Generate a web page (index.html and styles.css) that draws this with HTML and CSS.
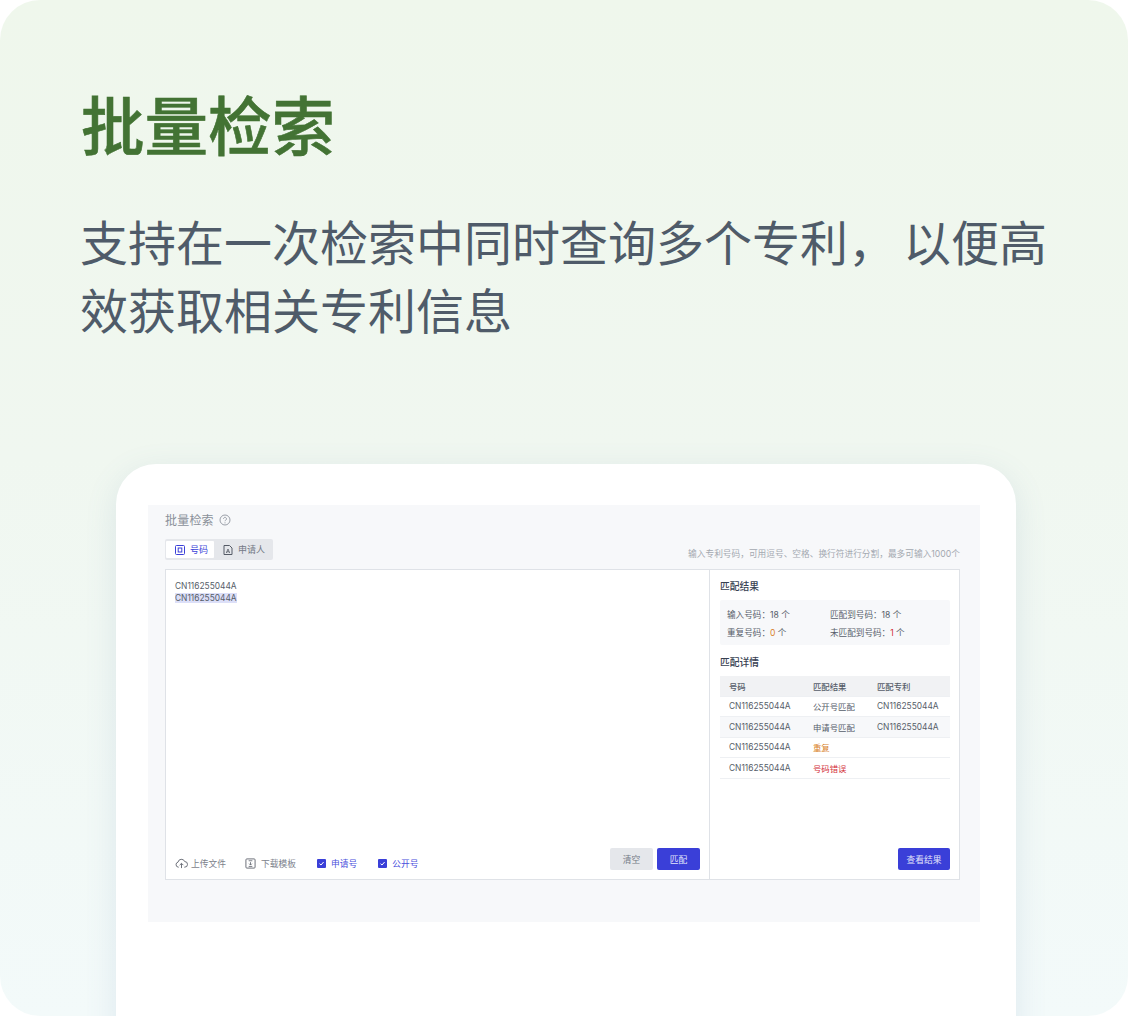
FILE: index.html
```html
<!DOCTYPE html>
<html lang="zh-CN">
<head>
<meta charset="utf-8">
<title>批量检索</title>
<link rel="stylesheet" href="styles.css">
</head>
<body>
<main class="hero">
  <h1 class="hero-title">批量检索</h1>
  <p class="hero-text">支持在一次检索中同时查询多个专利<span class="comma">，</span>以便高<br>效获取相关专利信息</p>
  <section class="device">
    <div class="app">
      <div class="app-title">批量检索
        <svg class="help" viewBox="0 0 12 12" width="12" height="12"><circle cx="6" cy="6" r="5" fill="none" stroke="#9a9fa8" stroke-width="1"/><path d="M4.500 4.800a1.500 1.500 0 1 1 2.300 1.300c-.5.300-.8.600-.8 1.100" fill="none" stroke="#9a9fa8" stroke-width="1"/><circle cx="6" cy="8.800" r=".6" fill="#9a9fa8"/></svg>
      </div>
      <div class="toolbar">
        <div class="tabs">
          <div class="tab tab-active">
            <svg viewBox="0 0 12 12" width="12" height="12"><rect x="1.500" y="1.500" width="9" height="9" rx="1" fill="none" stroke="#3a3fd8" stroke-width="1"/><rect x="4.200" y="4" width="3.600" height="4" fill="none" stroke="#3a3fd8" stroke-width="1"/></svg>
            号码
          </div>
          <div class="tab">
            <svg viewBox="0 0 12 12" width="12" height="12"><path d="M2 1.500h5.500L10 4v6.500H2z" fill="none" stroke="#555b66" stroke-width="1"/><path d="M4.300 9 6 5l1.700 4M4.900 7.800h2.200" fill="none" stroke="#555b66" stroke-width=".8"/></svg>
            申请人
          </div>
        </div>
        <div class="hint">输入专利号码，可用逗号、空格、换行符进行分割，最多可输入1000个</div>
      </div>
      <div class="panel">
        <div class="input-pane">
          <div class="codes">
            <div>CN116255044A</div>
            <div><span class="selected">CN116255044A</span></div>
          </div>
          <div class="input-foot">
            <div class="tool tool-upload">
              <svg viewBox="0 0 14 12" width="13" height="11"><path d="M4 10H3.500a2.800 2.800 0 0 1-.3-5.500 3.800 3.800 0 0 1 7.300-.6A3 3 0 0 1 10.500 10H10" fill="none" stroke="#60656f" stroke-width="1"/><path d="M7 11V6M5 7.800 7 5.800l2 2" fill="none" stroke="#60656f" stroke-width="1"/></svg>
              上传文件
            </div>
            <div class="tool tool-download">
              <svg viewBox="0 0 12 12" width="11" height="11"><rect x="1" y="1" width="10" height="10" rx="1" fill="none" stroke="#60656f" stroke-width="1"/><path d="M4 3h4M6 4.500v3M4.500 6.200 6 7.700l1.500-1.500M4 9.200h4" fill="none" stroke="#60656f" stroke-width=".9"/></svg>
              下载模板
            </div>
            <label class="check"><span class="box"><svg viewBox="0 0 9 9" width="9" height="9"><path d="M2.500 4.700 4 6l2.600-3" fill="none" stroke="#fff" stroke-width="1"/></svg></span>申请号</label>
            <label class="check"><span class="box"><svg viewBox="0 0 9 9" width="9" height="9"><path d="M2.500 4.700 4 6l2.600-3" fill="none" stroke="#fff" stroke-width="1"/></svg></span>公开号</label>
            <div class="actions">
              <button class="btn btn-grey">清空</button>
              <button class="btn btn-blue">匹配</button>
            </div>
          </div>
        </div>
        <div class="result-pane">
          <h2 class="section-title">匹配结果</h2>
          <div class="summary">
            <div>输入号码：18 个</div>
            <div>匹配到号码：18 个</div>
            <div>重复号码：<span class="orange">0</span> 个</div>
            <div>未匹配到号码：<span class="red">1</span> 个</div>
          </div>
          <h2 class="section-title section-title-detail">匹配详情</h2>
          <div class="table">
            <div class="row row-head"><span>号码</span><span>匹配结果</span><span>匹配专利</span></div>
            <div class="row"><span>CN116255044A</span><span>公开号匹配</span><span>CN116255044A</span></div>
            <div class="row row-alt"><span>CN116255044A</span><span>申请号匹配</span><span>CN116255044A</span></div>
            <div class="row"><span>CN116255044A</span><span class="orange">重复</span><span></span></div>
            <div class="row"><span>CN116255044A</span><span class="red">号码错误</span><span></span></div>
          </div>
          <div class="result-foot"><button class="btn btn-blue btn-wide">查看结果</button></div>
        </div>
      </div>
    </div>
  </section>
</main>
</body>
</html>
```
FILE: styles.css
```css
* { box-sizing: border-box; }
html, body { margin: 0; padding: 0; background: #fff; }
body {
  width: 1128px;
  height: 1016px;
  overflow: hidden;
  font-family: Inter, "Noto Sans CJK SC", sans-serif;
}
.hero {
  width: 1128px;
  height: 1016px;
  border-radius: 40px;
  overflow: hidden;
  padding: 83px 80px 0 80px;
  background: linear-gradient(180deg, #eff7ec 0%, #f0f7f0 45%, #f3fafa 100%);
}
.hero-title {
  margin: 0 0 0 1px;
  font: 500 63.500px/78px "Noto Sans CJK SC", sans-serif;
  -webkit-text-stroke: .6px #437334;
  color: #437334;
}
.hero-text {
  margin: 45px 0 0;
  width: 980px;
  font: 400 48px/68px "Noto Sans CJK SC", sans-serif;
  color: #4f5b69;
}
.comma { letter-spacing: 7px; }
.device {
  width: 900px;
  height: 600px;
  margin: 122px 0 0 36px;
  padding: 41px 36px 0 32px;
  border-radius: 40px;
  background: #fff;
  box-shadow: 0 8px 32px rgba(90, 130, 170, .14);
}
.app {
  height: 417px;
  padding: 0 20px 0 17px;
  background: #f7f8fa;
}
.app-title {
  display: flex;
  align-items: center;
  gap: 5px;
  height: 29px;
  font-size: 12px;
  letter-spacing: .2px;
  color: #8a9099;
}
.toolbar {
  display: flex;
  justify-content: space-between;
  align-items: flex-end;
  margin-top: 5px;
  height: 21px;
}
.tabs {
  display: flex;
  height: 21px;
  padding: 2px 1px;
  border-radius: 2px;
  background: #e5e7eb;
}
.tab {
  display: flex;
  align-items: center;
  gap: 4px;
  width: 58px;
  padding-left: 8px;
  font-size: 9px;
  white-space: nowrap;
  color: #737985;
}
.tab-active {
  width: 48px;
  background: #fff;
  color: #3a3fd8;
  border-radius: 1px;
}
.hint {
  font-size: 8.700px;
  line-height: 11px;
  color: #a3a8b0;
}
.panel {
  display: flex;
  margin-top: 9px;
  height: 311px;
  border: 1px solid #dfe2e7;
  background: #fff;
}
.input-pane {
  display: flex;
  flex: none;
  flex-direction: column;
  justify-content: space-between;
  width: 544px;
  padding: 10px 9px 9px 9px;
  border-right: 1px solid #dfe2e7;
}
.codes {
  font-size: 8.400px;
  line-height: 12px;
  color: #565d69;
}
.selected { background: #dcdff8; }
.input-foot {
  display: flex;
  align-items: flex-end;
  font-size: 8.750px;
  color: #7d828c;
}
.tool {
  display: flex;
  align-items: center;
  height: 14px;
}
.tool-upload { gap: 3px; margin-right: 19px; }
.tool-download { gap: 5px; margin-right: 21px; }
.check {
  display: flex;
  align-items: center;
  gap: 5px;
  height: 14px;
  margin-right: 21px;
  color: #4a4fdc;
}
.box {
  display: flex;
  width: 9px;
  height: 9px;
  border-radius: 1px;
  background: #3a3fd8;
}
.actions {
  display: flex;
  gap: 4px;
  margin-left: auto;
}
.btn {
  width: 43px;
  height: 22px;
  padding: 0;
  border: 0;
  border-radius: 2px;
  font: 400 8.750px "Noto Sans CJK SC", sans-serif;
}
.btn-grey { background: #e5e7eb; color: #737985; }
.btn-blue { background: #3a3fd8; color: #e4e6fb; }
.btn-wide { width: 52px; }
.result-pane {
  display: flex;
  flex-direction: column;
  flex: 1;
  min-width: 0;
  padding: 9px 9px 9px 10px;
}
.section-title {
  margin: 0;
  font: 500 9.750px/15px "Noto Sans CJK SC", sans-serif;
  color: #374151;
}
.section-title-detail { margin-top: 10px; }
.summary {
  display: grid;
  grid-template-columns: 103px 1fr;
  row-gap: 5px;
  align-content: center;
  height: 45px;
  margin-top: 6px;
  padding: 3px 7px 0;
  border-radius: 2px;
  background: #f7f8fa;
  font-size: 8.600px;
  line-height: 13px;
  color: #565d69;
}
.orange { color: #d9822b; }
.red { color: #d32f3a; }
.table {
  margin-top: 6px;
  font-size: 8.400px;
  color: #565d69;
}
.row {
  display: grid;
  grid-template-columns: 84px 64px 1fr;
  align-items: center;
  height: 20.500px;
  padding-left: 9px;
  border-bottom: 1px solid #eef0f3;
}
.row-head { background: #f1f2f4; font-weight: 500; }
.row-alt { background: #f7f8fa; }
.result-foot {
  display: flex;
  justify-content: flex-end;
  margin-top: auto;
}
```
